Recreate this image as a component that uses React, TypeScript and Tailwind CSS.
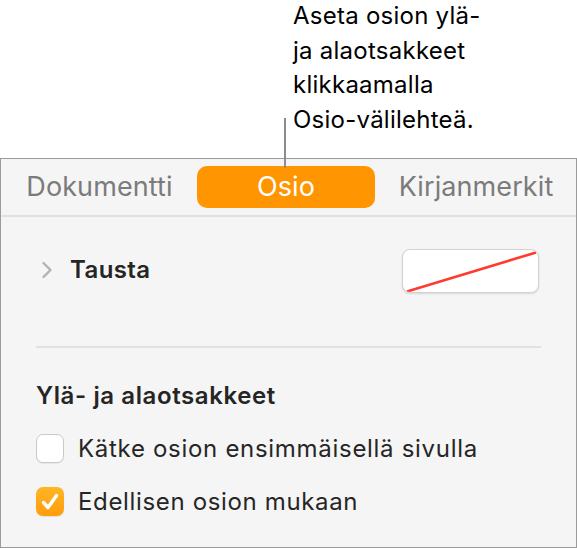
const font = { fontFamily: 'Inter, "Liberation Sans", sans-serif' };

function Chevron() {
	return (
		<svg width="12" height="18" viewBox="0 0 12 18" fill="none">
			<path d="M2.5 2 L9.5 9 L2.5 16" stroke="#b3b3b3" strokeWidth="2.4" strokeLinecap="round" strokeLinejoin="round" />
		</svg>
	);
}

function CheckIcon() {
	return (
		<svg width="28" height="29" viewBox="0 0 28 29" fill="none">
			<path d="M7.5 15.5 L12 20.5 L20.5 8.5" stroke="white" strokeWidth="3.4" strokeLinecap="round" strokeLinejoin="round" />
		</svg>
	);
}

export default function App() {
	return (
		<div className="relative w-[577px] h-[548px] bg-white overflow-hidden text-[#222]" style={font}>
			{/* callout */}
			<div className="h-[158px] pl-[293px] pt-[1px]">
				<div className="flex flex-col gap-[5.6px] text-[24px] leading-[29px] text-black tracking-[0.25px]">
					<div>Aseta osion ylä-</div>
					<div>ja alaotsakkeet</div>
					<div>klikkaamalla</div>
					<div>Osio-välilehteä.</div>
				</div>
			</div>

			{/* leader line */}
			<div className="absolute left-[284px] top-[118px] w-[2px] h-[50px] bg-[#8c8c8c] z-10" />

			{/* panel */}
			<div className="h-[390px] border border-[#9b9b9b] bg-[#f5f5f5]">
				{/* tabs */}
				<div className="flex items-start h-[58px] pt-[7px] pl-[7px] border-b-2 border-[#e0e0e0] text-[27px] tracking-[0.1px]">
					<div className="w-[183px] h-[42px] flex items-center justify-center text-[#7b7b7b]">Dokumentti</div>
					<div className="ml-[6px] w-[178px] h-[42px] rounded-[10px] bg-[#ff9500] text-white flex items-center justify-center">
						Osio
					</div>
					<div className="ml-[5px] w-[192px] h-[42px] flex items-center justify-center text-[#7b7b7b]">Kirjanmerkit</div>
				</div>

				<div className="px-[35px]">
					{/* Tausta row */}
					<div className="flex items-center mt-[32px] h-[44px]">
						<div className="ml-[5px] mt-[-2px]">
							<Chevron />
						</div>
						<div className="ml-[17px] text-[24px] font-semibold text-[#252525] tracking-[0.4px] mt-[-3px]">Tausta</div>
						<div className="ml-auto mr-[2px] relative w-[137px] h-[44px] rounded-[8px] bg-white border border-[#d2d2d2] shadow-[0_1px_2px_rgba(0,0,0,0.12)] overflow-hidden">
							<svg className="absolute inset-0" width="137" height="44" viewBox="0 0 137 44">
								<line x1="4" y1="41.5" x2="133" y2="2.5" stroke="#ff3b30" strokeWidth="2.6" />
							</svg>
						</div>
					</div>

					{/* separator */}
					<div className="mt-[53px] h-[2px] bg-[#e1e1e1]" />

					{/* header/footer section */}
					<div className="mt-[34px] text-[24px] font-semibold text-[#252525] leading-[28px] tracking-[0.6px]">
						Ylä- ja alaotsakkeet
					</div>

					<div className="mt-[24px] flex items-center">
						<div className="w-[28px] h-[29px] rounded-[7px] bg-white border border-[#c9c9c9] shadow-[0_1px_1px_rgba(0,0,0,0.06)]" />
						<div className="ml-[14px] text-[24px] leading-[29px] text-[#262626] tracking-[0.7px]">Kätke osion ensimmäisellä sivulla</div>
					</div>

					<div className="mt-[24px] flex items-center">
						<div className="w-[28px] h-[29px] rounded-[7px] bg-gradient-to-b from-[#ffb524] to-[#ff9d0a] shadow-[0_1px_1px_rgba(0,0,0,0.08)] flex items-center justify-center">
							<CheckIcon />
						</div>
						<div className="ml-[14px] text-[24px] leading-[29px] text-[#262626] tracking-[0.65px]">Edellisen osion mukaan</div>
					</div>
				</div>
			</div>
		</div>
	);
}
